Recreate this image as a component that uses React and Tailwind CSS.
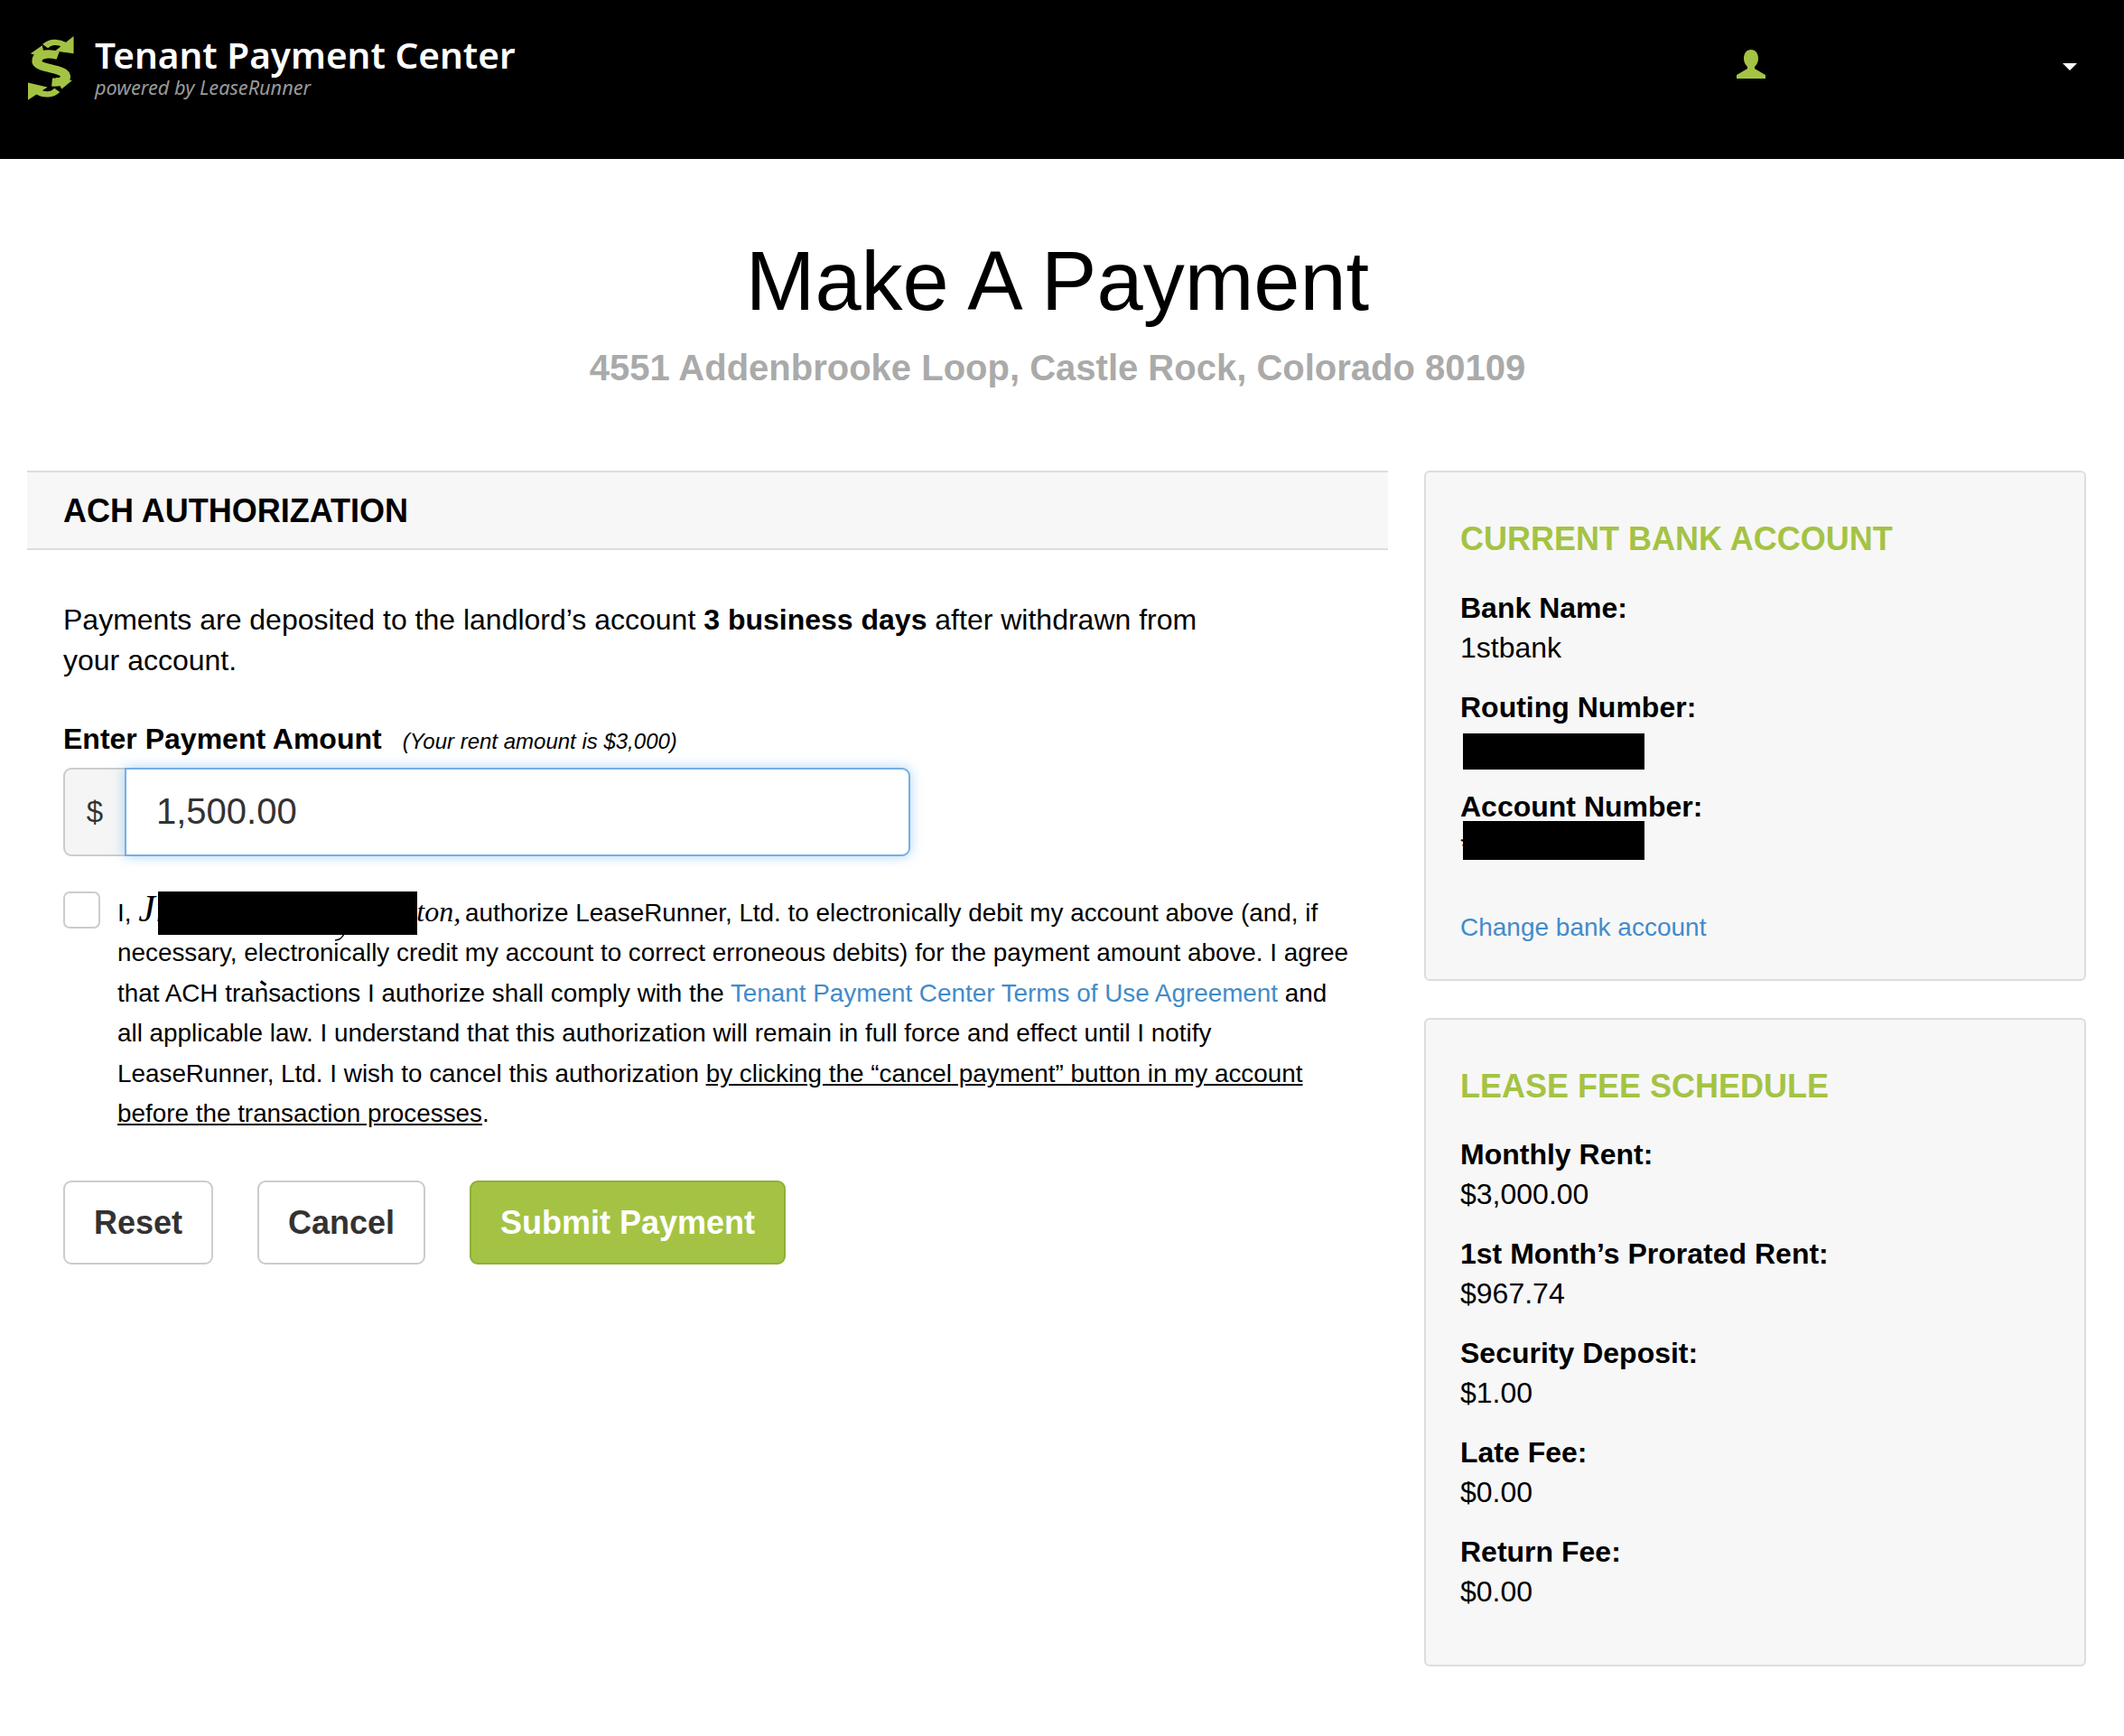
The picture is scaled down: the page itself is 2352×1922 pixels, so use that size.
import React from "react";

const SANS = "font-['Liberation_Sans',Arial,sans-serif]";

function Logo() {
  return (
    <svg viewBox="78 123 123 210" preserveAspectRatio="none" className="w-[51px] h-[71px] shrink-0 text-[#a4c344]" fill="none">
      {/* S body */}
      <path d="M158 186 C125 176 100 186 102 206 C104 232 176 226 178 254 C179 268 165 276 142 274" stroke="currentColor" strokeWidth="27" />
      <path d="M85 180 L116 153 L124 196 Z" fill="currentColor" />
      <path d="M196 268 L168 296 L152 258 Z" fill="currentColor" />
      {/* arrows */}
      <path d="M124 158 C136 140 156 136 176 150" stroke="#000000" strokeWidth="26" />
      <path d="M124 156 C136 142 156 138 176 152" stroke="currentColor" strokeWidth="19" />
      <path d="M200 123 L200 180 L150 172 Z" fill="currentColor" />
      <path d="M156 300 C142 318 122 320 104 306" stroke="#000000" strokeWidth="26" />
      <path d="M156 300 C142 316 122 318 104 304" stroke="currentColor" strokeWidth="19" />
      <path d="M78 332 L78 275 L130 290 Z" fill="currentColor" />
    </svg>
  );
}

function Header() {
  return (
    <header className="h-[176px] bg-black flex items-start pt-[40px] pl-[31px] pr-[52px]">
      <Logo />
      <div className="ml-[23px] font-['Noto_Sans',sans-serif] -mt-[4px]">
        <div className="text-white text-[40.5px] leading-[50px] font-semibold">Tenant Payment Center</div>
        <div className="text-[#9a9a9a] text-[21.7px] leading-[22px] italic">powered by LeaseRunner</div>
      </div>
      <div className="ml-auto flex items-center mt-[15px]">
        <svg viewBox="0 0 32 32" className="w-[32px] h-[32px] text-[#a4c344]" fill="currentColor">
          <path d="M16 0 C21 0 24 4 24 10 C24 14 22 17 20 19 L20 21 L32 28 L32 32 L0 32 L0 28 L12 21 L12 19 C10 17 8 14 8 10 C8 4 11 0 16 0 Z" />
        </svg>
        <div className="ml-[329px] mt-[6px] w-0 h-0 border-x-[8px] border-x-transparent border-t-[8px] border-t-white" />
      </div>
    </header>
  );
}

function Redaction({ className }) {
  return <div className={`absolute bg-black ${className}`} />;
}

function PaymentForm() {
  return (
    <section className="w-[1507px] shrink-0">
      <h2 className="h-[88px] pt-[2px] bg-[#f7f7f7] border-y-2 border-[#dddddd] px-[40px] flex items-center text-[36px] font-bold text-black">
        ACH AUTHORIZATION
      </h2>
      <div className="px-[40px]">
        <p className="mt-[55px] w-[1290px] text-[32px] leading-[45px] text-black">
          Payments are deposited to the landlord’s account <b>3 business days</b> after withdrawn from your account.
        </p>

        <div className="mt-[42px] flex items-baseline">
          <label className="text-[32px] leading-[45px] font-bold text-black">Enter Payment Amount</label>
          <span className="ml-[23px] text-[24px] italic text-black">(Your rent amount is $3,000)</span>
        </div>

        <div className="mt-[9px] flex w-[938px] h-[98px]">
          <div className="w-[68px] shrink-0 flex items-center justify-center bg-[#f5f5f5] border-2 border-r-0 border-[#cccccc] rounded-l-[9px] text-[33px] text-[#333333]">
            $
          </div>
          <input
            readOnly
            value="1,500.00"
            className="flex-1 min-w-0 bg-white border-2 border-[#74aee6] rounded-r-[9px] pl-[33px] pb-[2px] text-[40px] text-[#333333] outline-none shadow-[0_0_14px_rgba(102,175,233,0.55)]"
          />
        </div>

        <div className="mt-[39px] flex items-start">
          <div className="w-[41px] h-[41px] shrink-0 bg-white border-2 border-[#cccccc] rounded-[7px]" />
          <p className="relative ml-[19px] w-[1372px] shrink-0 text-[27.85px] leading-[44.4px] text-black mt-[2px]">
            I,{" "}
            <span className="inline-block w-[354px] whitespace-nowrap font-['Liberation_Serif',serif] italic text-[32px] leading-[32px]">
              <span className="inline-block w-[308px] text-[42px]">Ji</span>ton,
            </span>{" "}
            authorize LeaseRunner, Ltd. to electronically debit my account above (and, if necessary, electronically credit my account to correct erroneous debits) for the payment amount above. I agree that ACH transactions I authorize shall comply with the{" "}
            <a className="text-[#428bca]">Tenant Payment Center Terms of Use Agreement</a> and all applicable law. I understand that this authorization will remain in full force and effect until I notify LeaseRunner, Ltd. I wish to cancel this authorization{" "}
            <span className="underline">by clicking the “cancel payment” button in my account before the transaction processes</span>.
            <Redaction className="left-[45px] -top-[2px] w-[287px] h-[48px]" />
            <svg viewBox="0 0 12 8" className="absolute left-[240px] top-[45px] w-[12px] h-[8px]" fill="none" stroke="#000000" strokeWidth="1.5">
              <path d="M11 0 C9 4 5 7 1 7" />
            </svg>
            <span className="absolute left-[158px] top-[98px] w-[7px] h-[3px] bg-black rotate-[35deg]" />
          </p>
        </div>

        <div className="mt-[52px] flex gap-[49px]">
          <button className="w-[166px] h-[93px] bg-white border-2 border-[#cccccc] rounded-[9px] text-[36px] font-bold text-[#333333]">Reset</button>
          <button className="w-[186px] h-[93px] bg-white border-2 border-[#cccccc] rounded-[9px] text-[36px] font-bold text-[#333333]">Cancel</button>
          <button className="w-[350px] h-[93px] bg-[#a4c344] border-2 border-[#8fb03a] rounded-[9px] text-[36px] font-bold text-white">Submit Payment</button>
        </div>
      </div>
    </section>
  );
}

function Field({ label, children }) {
  return (
    <div className="mb-[22px]">
      <div className="text-[32px] leading-[44px] font-bold text-black">{label}</div>
      <div className="text-[32px] leading-[44px] text-black">{children}</div>
    </div>
  );
}

function Panel({ title, titleGap, children, className }) {
  return (
    <div className={`bg-[#f7f7f7] border-2 border-[#dddddd] rounded-[6px] px-[38px] pt-[51px] ${className}`}>
      <h3 className={`text-[36px] leading-[46px] font-bold text-[#a4c344] ${titleGap}`}>{title}</h3>
      {children}
    </div>
  );
}

function Sidebar() {
  return (
    <aside className="w-[733px] shrink-0 flex flex-col gap-[41px]">
      <Panel title="CURRENT BANK ACCOUNT" titleGap="mb-[31px]" className="h-[565px]">
        <Field label="Bank Name:">1stbank</Field>
        <Field label="Routing Number:">
          <div className="relative h-[44px]">
            <Redaction className="left-[3px] top-[7px] w-[201px] h-[40px]" />
          </div>
        </Field>
        <Field label="Account Number:">
          <div className="relative h-[44px]">
            <span>*</span>
            <Redaction className="left-[3px] -top-[6px] w-[201px] h-[43px]" />
          </div>
        </Field>
        <a className="block mt-[46px] text-[28px] leading-[44px] text-[#428bca]">Change bank account</a>
      </Panel>
      <Panel title="LEASE FEE SCHEDULE" titleGap="mb-[30px]" className="h-[718px]">
        <Field label="Monthly Rent:">$3,000.00</Field>
        <Field label="1st Month’s Prorated Rent:">$967.74</Field>
        <Field label="Security Deposit:">$1.00</Field>
        <Field label="Late Fee:">$0.00</Field>
        <Field label="Return Fee:">$0.00</Field>
      </Panel>
    </aside>
  );
}

export default function App() {
  return (
    <div className={`${SANS} w-[2352px] h-[1922px] bg-white`}>
      <Header />
      <div className="pt-[80px] pr-[10px] text-center">
        <h1 className="text-[92px] leading-[110px] text-black">Make A Payment</h1>
        <p className="mt-[16px] text-[40px] leading-[50px] font-bold text-[#aaaaaa]">
          4551 Addenbrooke Loop, Castle Rock, Colorado 80109
        </p>
      </div>
      <main className="mt-[89px] ml-[30px] flex gap-[40px]">
        <PaymentForm />
        <Sidebar />
      </main>
    </div>
  );
}
